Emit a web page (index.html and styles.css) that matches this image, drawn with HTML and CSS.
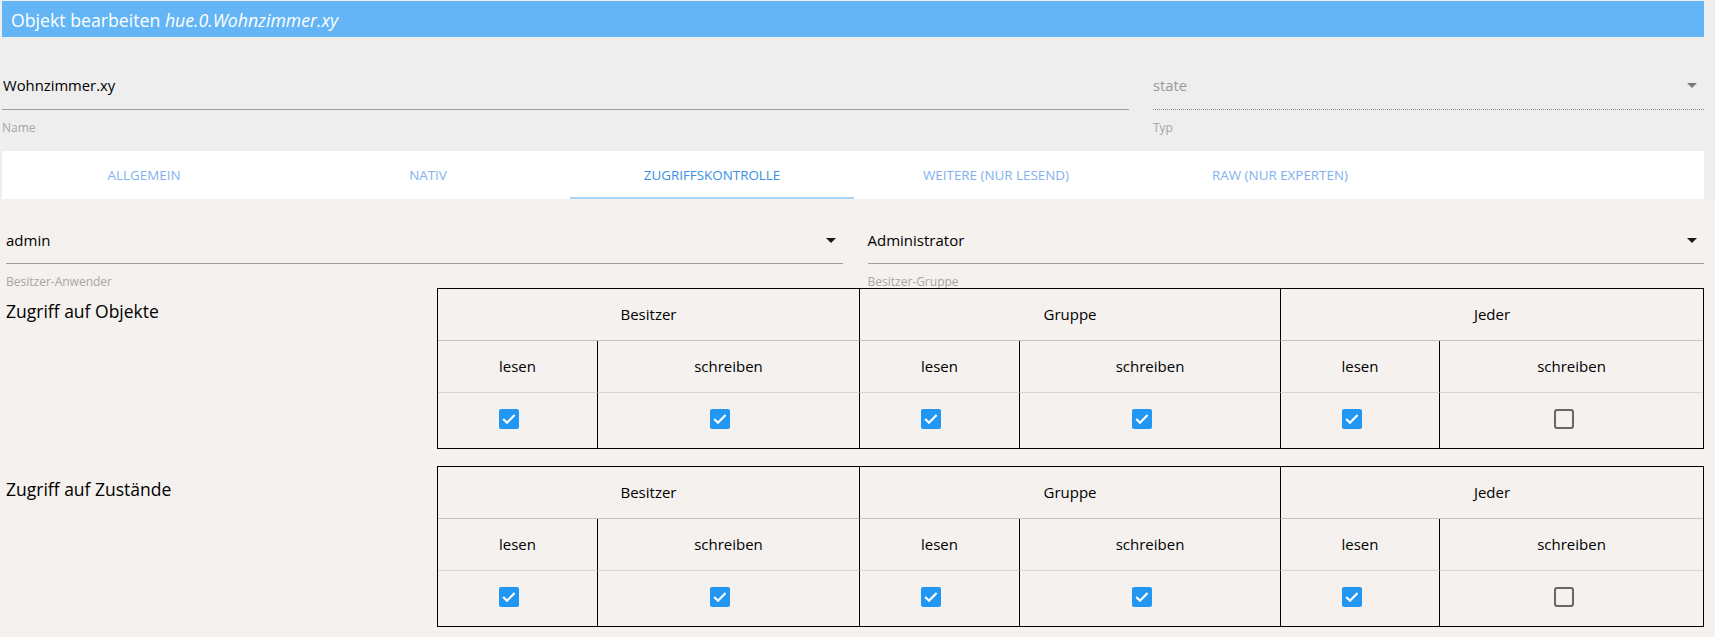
FILE: index.html
```html
<!DOCTYPE html>
<html lang="de">
<head>
<meta charset="utf-8">
<title>Objekt bearbeiten</title>
<link rel="stylesheet" href="styles.css">
</head>
<body>
<div class="top">
  <div class="titlebar">Objekt bearbeiten <i>hue.0.Wohnzimmer.xy</i></div>
  <div class="fields">
    <div class="field field-name">
      <div class="value">Wohnzimmer.xy</div>
      <div class="helper">Name</div>
    </div>
    <div class="field field-type">
      <div class="value disabled"><span>state</span><svg class="arrow" width="24" height="24" viewBox="0 0 24 24"><path d="M7 10l5 5 5-5z"/></svg></div>
      <div class="helper">Typ</div>
    </div>
  </div>
  <div class="tabs">
    <div class="tab">Allgemein</div>
    <div class="tab">Nativ</div>
    <div class="tab active">Zugriffskontrolle</div>
    <div class="tab">Weitere (nur lesend)</div>
    <div class="tab">Raw (nur Experten)</div>
  </div>
</div>
<div class="content">
  <div class="selects">
    <div class="select">
      <div class="value"><span>admin</span><svg class="arrow" width="24" height="24" viewBox="0 0 24 24"><path d="M7 10l5 5 5-5z"/></svg></div>
      <div class="helper">Besitzer-Anwender</div>
    </div>
    <div class="select">
      <div class="value"><span>Administrator</span><svg class="arrow" width="24" height="24" viewBox="0 0 24 24"><path d="M7 10l5 5 5-5z"/></svg></div>
      <div class="helper">Besitzer-Gruppe</div>
    </div>
  </div>

  <div class="acl-section">
    <div class="acl-label">Zugriff auf Objekte</div>
    <table class="acl">
      <colgroup><col class="c-r1"><col class="c-w1"><col class="c-r2"><col class="c-w2"><col class="c-r3"><col class="c-w3"></colgroup>
      <tr class="r-group"><th colspan="2">Besitzer</th><th colspan="2" class="bl">Gruppe</th><th colspan="2" class="bl">Jeder</th></tr>
      <tr class="r-sub"><td>lesen</td><td class="bl">schreiben</td><td class="bl">lesen</td><td class="bl">schreiben</td><td class="bl">lesen</td><td class="bl">schreiben</td></tr>
      <tr class="r-cb">
        <td><span class="cbwrap"><svg class="cb" width="20" height="20" viewBox="0 0 20 20"><rect width="20" height="20" rx="2" fill="#2196f3"/><path d="M4.2 10l3.8 3.8 7.6-7.8" fill="none" stroke="#fff" stroke-width="2.2"/></svg></span></td>
        <td class="bl"><span class="cbwrap"><svg class="cb" width="20" height="20" viewBox="0 0 20 20"><rect width="20" height="20" rx="2" fill="#2196f3"/><path d="M4.2 10l3.8 3.8 7.6-7.8" fill="none" stroke="#fff" stroke-width="2.2"/></svg></span></td>
        <td class="bl"><span class="cbwrap"><svg class="cb" width="20" height="20" viewBox="0 0 20 20"><rect width="20" height="20" rx="2" fill="#2196f3"/><path d="M4.2 10l3.8 3.8 7.6-7.8" fill="none" stroke="#fff" stroke-width="2.2"/></svg></span></td>
        <td class="bl"><span class="cbwrap"><svg class="cb" width="20" height="20" viewBox="0 0 20 20"><rect width="20" height="20" rx="2" fill="#2196f3"/><path d="M4.2 10l3.8 3.8 7.6-7.8" fill="none" stroke="#fff" stroke-width="2.2"/></svg></span></td>
        <td class="bl"><span class="cbwrap"><svg class="cb" width="20" height="20" viewBox="0 0 20 20"><rect width="20" height="20" rx="2" fill="#2196f3"/><path d="M4.2 10l3.8 3.8 7.6-7.8" fill="none" stroke="#fff" stroke-width="2.2"/></svg></span></td>
        <td class="bl"><span class="cbwrap"><svg class="cb" width="20" height="20" viewBox="0 0 20 20"><rect x="1" y="1" width="18" height="18" rx="2" fill="none" stroke="#666" stroke-width="2"/></svg></span></td>
      </tr>
    </table>
  </div>

  <div class="acl-section second">
    <div class="acl-label">Zugriff auf Zustände</div>
    <table class="acl">
      <colgroup><col class="c-r1"><col class="c-w1"><col class="c-r2"><col class="c-w2"><col class="c-r3"><col class="c-w3"></colgroup>
      <tr class="r-group"><th colspan="2">Besitzer</th><th colspan="2" class="bl">Gruppe</th><th colspan="2" class="bl">Jeder</th></tr>
      <tr class="r-sub"><td>lesen</td><td class="bl">schreiben</td><td class="bl">lesen</td><td class="bl">schreiben</td><td class="bl">lesen</td><td class="bl">schreiben</td></tr>
      <tr class="r-cb">
        <td><span class="cbwrap"><svg class="cb" width="20" height="20" viewBox="0 0 20 20"><rect width="20" height="20" rx="2" fill="#2196f3"/><path d="M4.2 10l3.8 3.8 7.6-7.8" fill="none" stroke="#fff" stroke-width="2.2"/></svg></span></td>
        <td class="bl"><span class="cbwrap"><svg class="cb" width="20" height="20" viewBox="0 0 20 20"><rect width="20" height="20" rx="2" fill="#2196f3"/><path d="M4.2 10l3.8 3.8 7.6-7.8" fill="none" stroke="#fff" stroke-width="2.2"/></svg></span></td>
        <td class="bl"><span class="cbwrap"><svg class="cb" width="20" height="20" viewBox="0 0 20 20"><rect width="20" height="20" rx="2" fill="#2196f3"/><path d="M4.2 10l3.8 3.8 7.6-7.8" fill="none" stroke="#fff" stroke-width="2.2"/></svg></span></td>
        <td class="bl"><span class="cbwrap"><svg class="cb" width="20" height="20" viewBox="0 0 20 20"><rect width="20" height="20" rx="2" fill="#2196f3"/><path d="M4.2 10l3.8 3.8 7.6-7.8" fill="none" stroke="#fff" stroke-width="2.2"/></svg></span></td>
        <td class="bl"><span class="cbwrap"><svg class="cb" width="20" height="20" viewBox="0 0 20 20"><rect width="20" height="20" rx="2" fill="#2196f3"/><path d="M4.2 10l3.8 3.8 7.6-7.8" fill="none" stroke="#fff" stroke-width="2.2"/></svg></span></td>
        <td class="bl"><span class="cbwrap"><svg class="cb" width="20" height="20" viewBox="0 0 20 20"><rect x="1" y="1" width="18" height="18" rx="2" fill="none" stroke="#666" stroke-width="2"/></svg></span></td>
      </tr>
    </table>
  </div>
</div>
</body>
</html>
```

FILE: styles.css
```css
* { box-sizing: border-box; }
html, body { margin: 0; padding: 0; }
body {
  background: #f4f1ee;
  font-family: "Open Sans", "Noto Sans", sans-serif;
  color: #000;
  width: 1715px;
  height: 637px;
  overflow: hidden;
}

.top {
  background: #eeeeee;
  padding: 1px 11px 0 2px;
}

.titlebar {
  height: 36px;
  background: #64b5f6;
  color: #fff;
  font-size: 17.7px;
  line-height: 38px;
  padding-left: 9px;
  white-space: nowrap;
}
.titlebar i { font-style: italic; }

.fields {
  display: flex;
  gap: 24px;
  margin-top: 36px;
}
.field-name { flex: 0 0 1127px; }
.field-type { flex: 1 1 auto; }

.value {
  display: flex;
  align-items: center;
  justify-content: space-between;
  height: 37px;
  padding-bottom: 12px;
  line-height: 24px;
  font-size: 14.8px;
  border-bottom: 1px solid #9e9e9e;
}
.field-name .value { padding-left: 1px; }
.value.disabled {
  color: #9a9a9a;
  border-bottom: 1px dotted #8a8a8a;
}
.arrow { flex: none; fill: #1a1a1a; }
.value.disabled .arrow { fill: #7a7a7a; }

.helper {
  margin-top: 10px;
  font-size: 12px;
  line-height: 16px;
  color: #a6a6a6;
  white-space: nowrap;
}

.tabs {
  display: flex;
  background: #fff;
  height: 48px;
  margin-top: 15px;
}
.tab {
  position: relative;
  flex: 0 0 284px;
  text-align: center;
  line-height: 48px;
  font-size: 13.4px;
  text-transform: uppercase;
  color: #82b1f0;
}
.tab.active { color: #3a8fe6; }
.tab.active::after {
  content: "";
  position: absolute;
  left: 0;
  right: 0;
  bottom: 0;
  height: 2px;
  background: #a6d4fa;
}

.content {
  padding: 0 11px 0 6px;
}

.selects {
  display: flex;
  gap: 25px;
  padding-top: 29px;
}
.select { flex: 1 1 0; }
.select .value {
  height: 36px;
  padding-bottom: 11px;
  border-bottom-color: #a19d9a;
  font-size: 15px;
}
.select .helper { margin-bottom: -2px; }

.acl-section { display: flex; }
.acl-section.second { margin-top: 17px; }
.acl-label {
  flex: 1 1 auto;
  padding-top: 11px;
  font-size: 17.5px;
  line-height: 24px;
  white-space: nowrap;
}

.acl {
  flex: none;
  width: 1267px;
  table-layout: fixed;
  border-collapse: separate;
  border-spacing: 0;
  border: 1px solid #000;
  font-size: 15px;
}
.c-r1 { width: 159px; }
.c-w1 { width: 262px; }
.c-r2 { width: 160px; }
.c-w2 { width: 261px; }
.c-r3 { width: 159px; }
.c-w3 { width: 264px; }

.acl th, .acl td {
  padding: 0;
  text-align: center;
  font-weight: normal;
}
.acl .bl { border-left: 1px solid #000; }
.r-group th { height: 52px; border-bottom: 1px solid #c4c4c4; padding-bottom: 1px; }
.r-sub td { height: 52px; border-bottom: 1px solid #d6d6d6; padding-bottom: 1px; }
.r-cb td { height: 55px; padding-bottom: 4px; }

.cbwrap {
  display: inline-flex;
  padding-right: 16px;
  vertical-align: middle;
}
.cb { display: block; }
```
